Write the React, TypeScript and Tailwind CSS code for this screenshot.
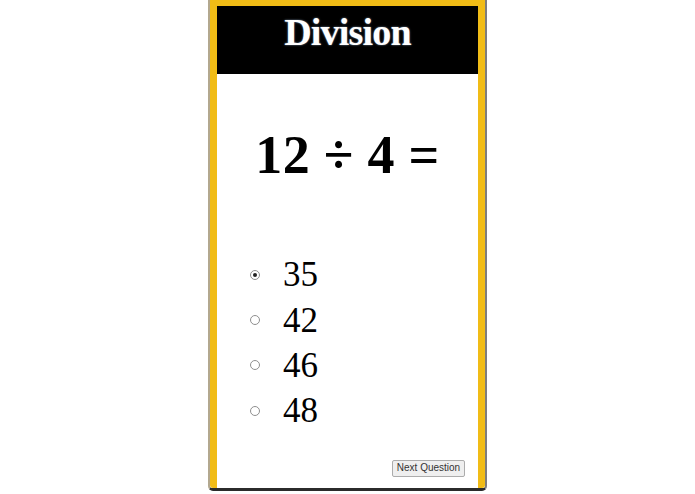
import { useState } from 'react'

const SERIF = "font-['Liberation_Serif','Times_New_Roman',serif]"

const CHOICES = ['35', '42', '46', '48']

export default function App(): JSX.Element {
  const [picked, setPicked] = useState('35')

  return (
    <div className="min-h-[494px] w-full bg-white">
      <div className="mx-auto w-[279px] rounded-b-[5px] border-b-[3px] border-l-2 border-r-2 border-b-[#2b2b2b] border-l-[#b3a88f] border-r-[#7d7d7d]">
        <div className="rounded-b-[3px] border-x-[7px] border-t-[6px] border-[#f1bc16] bg-white">
          {/* Title bar */}
          <div className="flex h-[68px] justify-center bg-black pt-[7px]">
            <h1
              className={`${SERIF} text-[38px] font-bold leading-none tracking-[-0.8px] text-white [text-shadow:0_0_2px_rgba(190,220,255,0.7)]`}
            >
              Division
            </h1>
          </div>

          {/* Question */}
          <p className={`${SERIF} pt-[54px] text-center text-[54px] font-bold leading-none tracking-[0.3px] text-black`}>
            12 ÷ 4 =
          </p>

          {/* Answers */}
          <ul className="mt-[70px] flex flex-col">
            {CHOICES.map((c) => (
              <li key={c}>
                <label className="flex h-[45.4px] cursor-pointer items-center pl-[33px]">
                  <input
                    type="radio"
                    name="answer"
                    value={c}
                    checked={picked === c}
                    onChange={() => setPicked(c)}
                    className="sr-only"
                  />
                  <span className="flex h-[10px] w-[10px] items-center justify-center rounded-full border border-[#8f8f8f] bg-white">
                    {picked === c && <span className="h-[4px] w-[4px] rounded-full bg-[#222]" />}
                  </span>
                  <span className={`${SERIF} ml-[23px] text-[35px] leading-[45px] text-black`}>{c}</span>
                </label>
              </li>
            ))}
          </ul>

          {/* Footer */}
          <div className="flex justify-end pb-[11px] pr-[13px] pt-[26px]">
            <button
              type="button"
              className="h-[17px] w-[73px] rounded-[2px] border border-[#acacac] bg-[#efefef] font-['Liberation_Sans',Arial,sans-serif] text-[10px] leading-none text-[#333]"
            >
              Next Question
            </button>
          </div>
        </div>
      </div>
    </div>
  )
}
